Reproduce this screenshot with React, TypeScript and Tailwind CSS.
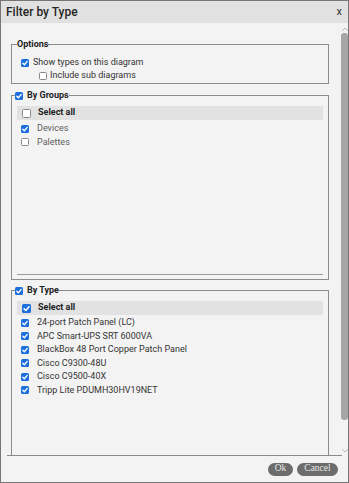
import React from "react";

function Box({ on, big }: { on?: boolean; big?: boolean }) {
  const dim = big ? "w-[9px] h-[9px]" : "w-[8px] h-[8px]";
  if (on)
    return (
      <span className={`${dim} shrink-0 rounded-[1.5px] bg-[#1c6fdc] flex items-center justify-center`}>
        <svg viewBox="0 0 10 10" className="w-full h-full">
          <path d="M2.3 5.3 4.2 7.2 7.8 3" fill="none" stroke="#fff" strokeWidth="1.7" strokeLinecap="round" strokeLinejoin="round" />
        </svg>
      </span>
    );
  return <span className={`${dim} shrink-0 rounded-[1.5px] border border-[#8a8a8a] bg-white`} />;
}

function Row({ label, on, muted }: { label: string; on?: boolean; muted?: boolean }) {
  return (
    <div className={`h-[13.5px] flex items-center gap-[8px] pl-[4px] ${muted ? "text-[#5e5e5e]" : "text-[#333]"}`}>
      <Box on={on} />
      <span className="whitespace-nowrap">{label}</span>
    </div>
  );
}

function Panel({ allOn, h, children }: { allOn?: boolean; h: string; children: React.ReactNode }) {
  return (
    <div className={`${h} border-b border-[#9a9a9a]`}>
      <div className="h-[14px] bg-[#e2e2e2] flex items-center gap-[7px] pl-[5px] font-bold text-[#222]">
        <Box on={allOn} big />
        <span>Select all</span>
      </div>
      {children}
    </div>
  );
}

function Chevron({ up }: { up?: boolean }) {
  return (
    <svg viewBox="0 0 8 5" className="w-[8px] h-[5px]">
      <path d={up ? "M1 4 4 1 7 4" : "M1 1 4 4 7 1"} fill="none" stroke="#b8b8b8" strokeWidth="1" />
    </svg>
  );
}

const types = [
  "24-port Patch Panel (LC)",
  "APC Smart-UPS SRT 6000VA",
  "BlackBox 48 Port Copper Patch Panel",
  "Cisco C9300-48U",
  "Cisco C9500-40X",
  "Tripp Lite PDUMH30HV19NET",
];

export default function App() {
  return (
    <div className="w-[349px] h-[483px] border border-[#767676] bg-[#f3f3f3] flex flex-col overflow-hidden font-[Roboto,sans-serif] text-[9px] text-[#333]">
      {/* title bar */}
      <div className="h-[22px] shrink-0 bg-[#e1e1e1] flex items-center justify-between pl-[5px] pr-[6px]">
        <span className="text-[12px] font-medium text-[#262626]">Filter by Type</span>
        <span className="text-[11px] text-[#333]">x</span>
      </div>

      <div className="flex flex-1 min-h-0">
        <div className="flex-1 min-w-0 overflow-hidden pl-[10px] pr-[6px] pt-[16px]">
          <fieldset className="border border-[#8c8c8c] px-[5px] pt-[6px] pb-[1px]">
            <legend className="font-bold leading-[11px] text-[#222]">Options</legend>
            <div className="h-[13px] flex items-center gap-[4px] pl-[4px]">
              <Box on />
              <span>Show types on this diagram</span>
            </div>
            <div className="h-[13px] flex items-center gap-[3px] pl-[22px]">
              <Box />
              <span>Include sub diagrams</span>
            </div>
          </fieldset>

          <fieldset className="mt-[6px] border border-[#8c8c8c] px-[5px] pt-[5px] pb-[4px]">
            <legend className="-ml-[2px] flex items-center gap-[4px] leading-[11px] font-bold text-[#222]">
              <Box on />
              <span>By Groups</span>
            </legend>
            <Panel h="h-[169px]">
              <div className="pt-[2px]">
                <Row label="Devices" on muted />
                <Row label="Palettes" muted />
              </div>
            </Panel>
          </fieldset>

          <fieldset className="mt-[5px] border border-[#8c8c8c] px-[5px] pt-[5px] pb-[4px]">
            <legend className="-ml-[2px] flex items-center gap-[4px] leading-[11px] font-bold text-[#222]">
              <Box on />
              <span>By Type</span>
            </legend>
            <Panel h="h-[169px]" allOn>
              <div className="pt-[1px]">
                {types.map((t) => (
                  <Row key={t} label={t} on />
                ))}
              </div>
            </Panel>
          </fieldset>
        </div>

        {/* scrollbar */}
        <div className="w-[13px] shrink-0 pl-[6px] flex">
          <div className="w-[7px] flex flex-col items-center">
            <div className="mt-[4px]">
              <Chevron up />
            </div>
            <div className="mt-[1px] w-[7px] h-[387px] rounded-[3px] bg-[#a6a6a6]" />
            <div className="flex-1" />
            <div className="mb-[2px]">
              <Chevron />
            </div>
          </div>
        </div>
      </div>

      {/* footer */}
      <div className="h-[27px] shrink-0 mx-[6px] border-t border-[#8a8a8a] flex items-center justify-end gap-[4px] pr-[4px] font-['Liberation_Serif',serif] text-[9.5px] text-[#e6e6e6]">
        <button className="w-[25px] h-[13px] rounded-full bg-[#6c6c6c] leading-none">Ok</button>
        <button className="w-[41px] h-[13px] rounded-full bg-[#6c6c6c] leading-none">Cancel</button>
      </div>
    </div>
  );
}
